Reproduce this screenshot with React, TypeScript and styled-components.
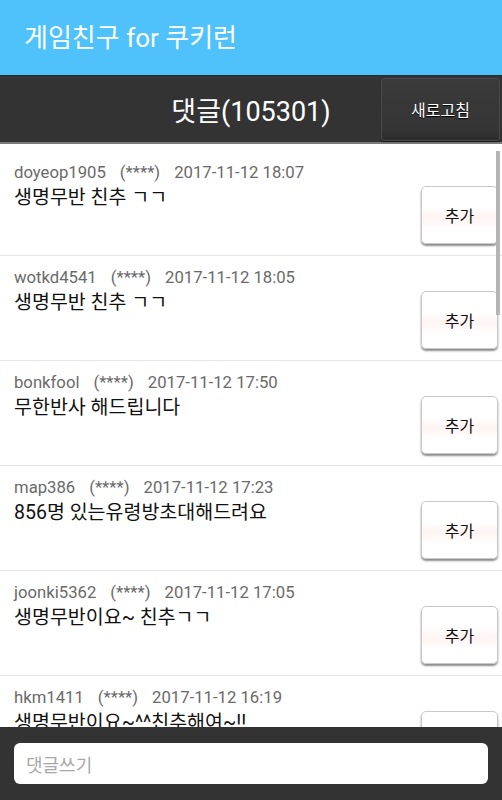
import styled, { createGlobalStyle } from 'styled-components';

const GlobalStyle = createGlobalStyle`
  html, body {
    margin: 0;
    padding: 0;
    background: #ffffff;
  }
  body {
    font-family: Roboto, "Noto Sans CJK KR", "Noto Sans", sans-serif;
  }
  * {
    box-sizing: border-box;
  }
`;

const Page = styled.div`
  width: 502px;
  height: 800px;
  display: flex;
  flex-direction: column;
  overflow: hidden;
  background: #ffffff;
`;

const AppBar = styled.header`
  height: 75px;
  flex-shrink: 0;
  display: flex;
  align-items: center;
  padding: 0 0 4px 24px;
  background: #4fc2fb;
  color: #ffffff;
  font-size: 26px;
  font-family: Roboto, "Noto Sans CJK KR", sans-serif;
`;

const TitleBar = styled.div`
  height: 69px;
  flex-shrink: 0;
  display: grid;
  grid-template-columns: 1fr auto 1fr;
  align-items: center;
  background: #333333;
  border-bottom: 2px solid #7a7a7a;
  border-top: 1px solid #2a2a2a;
`;

const Title = styled.h1`
  grid-column: 2;
  margin: 0;
  font-weight: 400;
  font-size: 27px;
  color: #ffffff;
  font-family: Roboto, "Noto Sans CJK KR", sans-serif;
`;

const RefreshButton = styled.button`
  grid-column: 3;
  justify-self: end;
  width: 119px;
  height: 63px;
  margin-right: 2px;
  border: 1px solid #4a4a4a;
  border-radius: 3px;
  background: linear-gradient(#3a3a3a, #353535 80%, #2c2c2c);
  box-shadow: 0 1px 1px rgba(0, 0, 0, 0.6);
  color: #ffffff;
  font-size: 16px;
  text-shadow: 0 1px 1px #000000;
  font-family: "Noto Sans CJK KR", sans-serif;
`;

const List = styled.div`
  flex: 1;
  position: relative;
  overflow: hidden;
  padding-top: 7px;
`;

const ScrollThumb = styled.div`
  position: absolute;
  top: 7px;
  right: 2px;
  width: 4px;
  height: 164px;
  background: #b4b4b4;
`;

const Row = styled.div`
  height: 105px;
  flex-shrink: 0;
  display: flex;
  justify-content: space-between;
  padding: 12px 4px 0 14px;
  border-bottom: 1px solid #e4e4e4;
`;

const Content = styled.div`
  display: flex;
  flex-direction: column;
`;

const Meta = styled.div`
  display: flex;
  gap: 14px;
  font-size: 16.7px;
  line-height: 20px;
  color: #6a6a6a;
  font-family: Roboto, sans-serif;
`;

const Message = styled.div`
  margin-top: 2px;
  font-size: 19.5px;
  line-height: 26px;
  color: #111111;
  font-family: Roboto, "Noto Sans CJK KR", sans-serif;
`;

const AddButton = styled.button`
  flex-shrink: 0;
  align-self: flex-start;
  margin-top: 23px;
  width: 77px;
  height: 58px;
  border: 1px solid #c8c8c8;
  border-radius: 5px;
  background: linear-gradient(#ffffff 0%, #ffffff 35%, #fdf4f3 55%, #ffffff 75%);
  box-shadow: 0 2px 2px rgba(0, 0, 0, 0.45);
  color: #111111;
  font-size: 16px;
  font-family: "Noto Sans CJK KR", sans-serif;
`;

const BottomBar = styled.div`
  height: 73px;
  flex-shrink: 0;
  display: flex;
  align-items: center;
  padding: 0 14px;
  background: #333333;
`;

const CommentInput = styled.input`
  width: 474px;
  height: 41px;
  border: none;
  border-radius: 6px;
  padding: 0 12px;
  background: #ffffff;
  font-size: 18px;
  font-family: "Noto Sans CJK KR", sans-serif;
  outline: none;

  &::placeholder {
    color: #a8a8a8;
  }
`;

const comments = [
  { user: 'doyeop1905', time: '2017-11-12 18:07', text: '생명무반 친추 ㄱㄱ' },
  { user: 'wotkd4541', time: '2017-11-12 18:05', text: '생명무반 친추 ㄱㄱ' },
  { user: 'bonkfool', time: '2017-11-12 17:50', text: '무한반사 해드립니다' },
  { user: 'map386', time: '2017-11-12 17:23', text: '856명 있는유령방초대해드려요' },
  { user: 'joonki5362', time: '2017-11-12 17:05', text: '생명무반이요~ 친추ㄱㄱ' },
  { user: 'hkm1411', time: '2017-11-12 16:19', text: '생명무반이요~^^친추해여~!!' },
];

export default function App() {
  return (
    <Page>
      <GlobalStyle />
      <AppBar>게임친구 for 쿠키런</AppBar>
      <TitleBar>
        <Title>댓글(105301)</Title>
        <RefreshButton>새로고침</RefreshButton>
      </TitleBar>
      <List>
        {comments.map((c) => (
          <Row key={c.user}>
            <Content>
              <Meta>
                <span>{c.user}</span>
                <span>(****)</span>
                <span>{c.time}</span>
              </Meta>
              <Message>{c.text}</Message>
            </Content>
            <AddButton>추가</AddButton>
          </Row>
        ))}
        <ScrollThumb />
      </List>
      <BottomBar>
        <CommentInput placeholder="댓글쓰기" />
      </BottomBar>
    </Page>
  );
}
